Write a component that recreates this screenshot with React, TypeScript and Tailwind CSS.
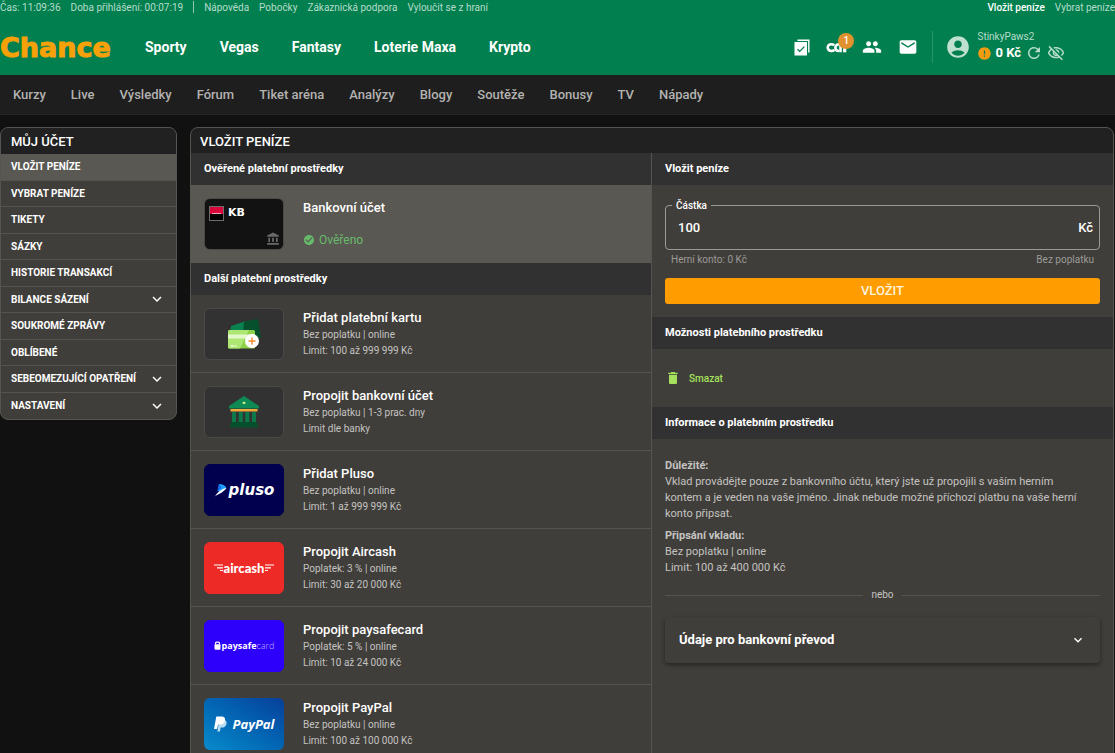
import React from 'react';
import {
    MdAccountBalance,
    MdAccountCircle,
    MdCheckCircle,
    MdDelete,
    MdEmail,
    MdError,
    MdExpandMore,
    MdOutlineVisibilityOff,
    MdPeople,
    MdRefresh,
} from 'react-icons/md';
import { clsx } from 'clsx';

const helpLinks = ['Nápověda', 'Pobočky', 'Zákaznická podpora', 'Vyloučit se z hraní'];
const products = ['Sporty', 'Vegas', 'Fantasy', 'Loterie Maxa', 'Krypto'];
const subNav = ['Kurzy', 'Live', 'Výsledky', 'Fórum', 'Tiket aréna', 'Analýzy', 'Blogy', 'Soutěže', 'Bonusy', 'TV', 'Nápady'];

const accountMenu = [
    { label: 'Vložit peníze', active: true },
    { label: 'Vybrat peníze' },
    { label: 'Tikety' },
    { label: 'Sázky' },
    { label: 'Historie transakcí' },
    { label: 'Bilance sázení', expandable: true },
    { label: 'Soukromé zprávy' },
    { label: 'Oblíbené' },
    { label: 'Sebeomezující opatření', expandable: true },
    { label: 'Nastavení', expandable: true },
];

const TicketIcon = () => (
    <svg width="16" height="17" viewBox="0 0 16 17" fill="none">
        <path d="M3.5 1.2H14.8V13.5" stroke="#fff" strokeWidth="1.4" />
        <rect x="0.5" y="3" width="12.5" height="13.5" fill="#fff" />
        <path d="M3.5 10.2l2.2 2.2 4.6-4.8" stroke="#027f4e" strokeWidth="1.3" />
    </svg>
);

const CommunityIcon = () => (
    <svg width="22" height="13" viewBox="0 0 22 13" fill="none" stroke="#fff">
        <path d="M8.3 4.2C7.4 3.5 6.3 3.2 5.2 3.2 3.200 3.200 1.700 4.700 1.700 6.600S3.200 10 5.200 10c1.200 0 2.300-.3 3.200-1" strokeWidth="2.6" />
        <path d="M13 10c-2.200 0-3.600-1.400-3.600-3.300S10.800 3.300 13 3.300h1.500V11.300" strokeWidth="2.600" />
        <path d="M18.700 4V11.300" strokeWidth="3.200" />
    </svg>
);

const CardsArt = () => (
    <svg width="34" height="32" viewBox="0 0 34 32">
        <path d="M4 8L19 3l4 12H3z" fill="#0b8050" />
        <path d="M17 3.500l12.500-2.300c1-.2 1.500.2 1.700 1L34 20 16 18z" fill="#07502d" />
        <rect x="1" y="12" width="27" height="18.500" rx="1.500" fill="#8fd14a" />
        <path d="M2.500 12H22L13 30.500H2.500A1.500 1.500 0 0 1 1 29V13.500A1.500 1.500 0 0 1 2.500 12z" fill="#aee673" />
        <rect x="1" y="16.500" width="27" height="4" fill="#e3f8cb" />
        <path d="M3.500 28h4M8.500 28h1.500" stroke="#e9fbd5" strokeWidth="1.400" />
        <circle cx="25" cy="23" r="7" fill="#fff" />
        <path d="M25 19.500v7M21.500 23h7" stroke="#ef8b2c" strokeWidth="1.400" />
    </svg>
);

const BankArt = () => (
    <svg width="32" height="34" viewBox="0 0 32 34">
        <path d="M16 1L31 11v2.500H1V11z" fill="#0f8a55" />
        <path d="M14 8L16 6.500 18 8l-2 1.200z" fill="#d3ec8b" />
        <rect x="2.500" y="14" width="27" height="2.500" fill="#efa93a" />
        <path d="M4 17h4v10H4zM10.700 17h4v10h-4zM17.300 17h4v10h-4zM24 17h4v10h-4z" fill="#0b7a4a" />
        <path d="M3 27h26v2.500h1V32.500H2v-3h1z" fill="#06502d" />
    </svg>
);

const PlusoArt = () => (
    <div className="flex items-center gap-0.5">
        <svg width="13" height="14" viewBox="0 0 13 14">
            <path d="M5 1c3.500 0 6 1.500 7.500 4L6.500 9 3.500 7.500z" fill="#1fa0ff" />
            <path d="M5 1L3.500 8l4-3z" fill="#1467e8" />
            <path d="M12.500 5C9 5.500 4 8 1 13.500 4 11 9 10 12.500 5z" fill="#fff" />
        </svg>
        <span className="font-['DejaVu_Sans'] text-[15px] leading-4 font-bold italic">pluso</span>
    </div>
);

const Wing = ({ flip = false }: { flip?: boolean }) => (
    <svg width="10" height="8" viewBox="0 0 10 8" className={flip ? '-scale-x-100' : ''} stroke="#fff" strokeWidth="1.200">
        <path d="M0 1h9M3 3.800h6M6 6.500h3" />
    </svg>
);

const AircashArt = () => (
    <div className="flex items-center">
        <Wing />
        <span className="font-['Lato'] text-[13px] leading-4 font-black">aircash</span>
        <Wing flip />
    </div>
);

const PaysafeArt = () => (
    <div className="flex items-center gap-px">
        <svg width="7" height="9" viewBox="0 0 7 9">
            <path d="M1.500 3.500V2.200a1 1 0 0 1 1-1h2a1 1 0 0 1 1 1v1.300" fill="none" stroke="#fff" strokeWidth="1.200" />
            <rect x="0.500" y="3.200" width="6" height="5.500" rx="1" fill="#fff" />
        </svg>
        <span className="font-['Open_Sans'] text-[9px] leading-4 font-bold">
            paysafe<span className="font-light text-white/70">card</span>
        </span>
    </div>
);

const PayPalArt = () => (
    <div className="flex items-center gap-1.5">
        <svg width="13" height="16" viewBox="0 0 13 16">
            <path d="M5.200 3.800h5c2 .6 2.800 2.200 2.300 4.200-.6 2.500-2.300 3.600-4.800 3.600H6.600L6 15.500H3.400z" fill="#b9dcf2" />
            <path d="M2.300.5h5.200c2.700 0 4 1.500 3.500 4-.6 2.800-2.400 4-5 4H4L3.100 13H0z" fill="#fff" />
        </svg>
        <span className="font-['Open_Sans'] text-[13px] leading-4 font-bold italic">PayPal</span>
    </div>
);

const methods = [
    { title: 'Přidat platební kartu', fee: 'Bez poplatku | online', limit: 'Limit: 100 až 999 999 Kč', tile: 'bg-[#323233] border-[#4a4947]', art: <CardsArt /> },
    { title: 'Propojit bankovní účet', fee: 'Bez poplatku | 1-3 prac. dny', limit: 'Limit dle banky', tile: 'bg-[#323233] border-[#4a4947]', art: <BankArt /> },
    { title: 'Přidat Pluso', fee: 'Bez poplatku | online', limit: 'Limit: 1 až 999 999 Kč', tile: 'bg-[#00004f] border-[#00004f]', art: <PlusoArt /> },
    { title: 'Propojit Aircash', fee: 'Poplatek: 3 % | online', limit: 'Limit: 30 až 20 000 Kč', tile: 'bg-[#ee2a27] border-[#ee2a27]', art: <AircashArt /> },
    { title: 'Propojit paysafecard', fee: 'Poplatek: 5 % | online', limit: 'Limit: 10 až 24 000 Kč', tile: 'bg-[#2c00fa] border-[#2c00fa]', art: <PaysafeArt /> },
    { title: 'Propojit PayPal', fee: 'Bez poplatku | online', limit: 'Limit: 100 až 100 000 Kč', tile: 'bg-linear-to-tr from-[#0a8bcb] to-[#083f9b] border-transparent bg-origin-border', art: <PayPalArt /> },
];

const SectionTitle = ({ children }: { children: React.ReactNode }) => (
    <h2 className="h-8 px-[13px] pt-px flex items-center bg-[#313132] text-[11px] font-bold text-white">{children}</h2>
);

const Header = () => (
    <header className="bg-[#027f4e] h-[75px]">
        <div className="flex items-center justify-between h-3.5 text-[10px] text-[#b5dccb]">
            <div className="flex items-center">
                <span>Čas: 11:09:36</span>
                <span className="ml-2.5">Doba přihlášení: 00:07:19</span>
                <span className="mx-2.5 w-px h-3 bg-[#8cc7ae]" />
                <nav className="flex gap-2.5">
                    {helpLinks.map((l) => <a key={l} href="#">{l}</a>)}
                </nav>
            </div>
            <div className="flex gap-2.5">
                <a href="#" className="font-medium text-white">Vložit peníze</a>
                <a href="#">Vybrat peníze</a>
            </div>
        </div>

        <div className="flex items-center h-[66px]">
            <a href="#" className="w-[113px] pt-0.5 font-['DejaVu_Sans'] text-[27px] leading-8 font-bold text-[#f7a109] [-webkit-text-stroke:1px_#f7a109]">Chance</a>
            <nav className="flex gap-[33px] ml-8 text-[14px] font-bold text-white">
                {products.map((p) => <a key={p} href="#">{p}</a>)}
            </nav>

            <div className="ml-auto mr-[50px] flex items-center">
                <button type="button" aria-label="Tikety"><TicketIcon /></button>
                <button type="button" aria-label="Komunita" className="relative ml-4">
                    <CommunityIcon />
                    <span className="absolute -top-2 -right-1.5 w-4 h-4 rounded-full bg-[#e0922e] text-white text-[10px] leading-4 font-medium text-center">1</span>
                </button>
                <button type="button" aria-label="Přátelé" className="ml-3.5"><MdPeople className="w-5 h-5 text-white" /></button>
                <button type="button" aria-label="Zprávy" className="ml-4"><MdEmail className="w-5 h-5 text-white" /></button>
                <span className="ml-3.5 w-px h-8 bg-[#2c9168]" />
                <MdAccountCircle className="ml-3 w-[26px] h-[26px] text-[#bfe0d0]" />
                <div className="ml-1.5">
                    <div className="text-[10px] leading-3 text-[#b5dccb]">StinkyPaws2</div>
                    <div className="flex items-center h-5 text-[#b5dccb]">
                        <MdError className="w-[15px] h-[15px] text-[#f39c12]" />
                        <span className="ml-[3px] text-[13px] font-bold text-white">0 Kč</span>
                        <button type="button" aria-label="Obnovit" className="ml-1"><MdRefresh className="w-[18px] h-[18px]" /></button>
                        <button type="button" aria-label="Skrýt zůstatek" className="ml-1"><MdOutlineVisibilityOff className="w-[18px] h-[18px]" /></button>
                    </div>
                </div>
            </div>
        </div>
    </header>
);

const Sidebar = () => (
    <aside className="w-[177px] shrink-0 self-start rounded-lg overflow-hidden border border-[#55544f] bg-[#403e3a]">
        <h2 className="h-[26px] px-2.5 pt-px flex items-center bg-[#212121] text-[13px] font-medium text-white">MŮJ ÚČET</h2>
        <nav className="grid auto-rows-fr h-[265px]">
            {accountMenu.map((item) => (
                <a
                    key={item.label}
                    href="#"
                    className={clsx(
                        'flex items-center justify-between pl-2.5 pr-2.5 border-b border-[#55544f] last:border-b-0 text-[10px] font-bold uppercase text-white',
                        item.active && 'bg-[#5a5853]'
                    )}
                >
                    {item.label}
                    {item.expandable && <MdExpandMore className="w-[18px] h-[18px]" />}
                </a>
            ))}
        </nav>
    </aside>
);

const PaymentMethods = () => (
    <section className="w-1/2 border-r border-[#55544f]">
        <SectionTitle>Ověřené platební prostředky</SectionTitle>
        <div className="flex items-center h-[78px] px-[13px] bg-[#5a5853] text-white">
            <div className="relative w-20 h-[52px] rounded-md border border-[#4c4a46] bg-[#121213]">
                <div className="flex items-center gap-1 pl-1 pt-1.5">
                    <svg width="15" height="15" viewBox="0 0 15 15">
                        <rect x="0.500" y="0.500" width="14" height="14" fill="#000" stroke="#6d6d6d" />
                        <rect x="1" y="1" width="13" height="7" fill="#d8063a" />
                        <rect x="3" y="7" width="9" height="1" fill="#e9a9b8" />
                    </svg>
                    <span className="font-['DejaVu_Sans'] text-[11px] leading-4 font-bold">KB</span>
                </div>
                <MdAccountBalance className="absolute right-[3px] bottom-[3px] w-3.5 h-3.5 text-[#6a6a6a]" />
            </div>
            <div className="ml-[19px]">
                <div className="text-[13px] leading-4 font-medium">Bankovní účet</div>
                <div className="mt-4 flex items-center gap-1 text-[12px] leading-4 text-[#66bb6a]">
                    <MdCheckCircle className="w-3 h-3" /> Ověřeno
                </div>
            </div>
        </div>

        <SectionTitle>Další platební prostředky</SectionTitle>
        <ul>
            {methods.map((m) => (
                <li key={m.title} className="border-b border-[#55544f]">
                    <button type="button" className="flex items-center w-full h-[77px] px-[13px] text-left">
                        <span className={clsx('w-20 h-[52px] flex items-center justify-center rounded-md border text-white', m.tile)}>
                            {m.art}
                        </span>
                        <span className="ml-[19px] flex flex-col text-[10px] leading-4 text-[#c4c3c1]">
                            <span className="text-[13px] leading-[18px] font-medium text-white">{m.title}</span>
                            <span>{m.fee}</span>
                            <span>{m.limit}</span>
                        </span>
                    </button>
                </li>
            ))}
        </ul>
    </section>
);

const DepositPanel = () => {
    const [amount, setAmount] = React.useState('100');

    return (
        <section className="w-1/2">
            <SectionTitle>Vložit peníze</SectionTitle>
            <form className="px-[13px] pt-5 pb-[13px]" onSubmit={(e) => e.preventDefault()}>
                <div className="relative flex items-center h-[45px] px-3 rounded border border-[#9b9a97] text-[13px] font-medium text-white">
                    <label htmlFor="amount" className="absolute -top-2 left-1.5 px-1 bg-[#403e3a] text-[10px] leading-4">Částka</label>
                    <input
                        id="amount"
                        type="text"
                        value={amount}
                        onChange={(e) => setAmount(e.target.value)}
                        className="flex-1 min-w-0 bg-transparent outline-none"
                    />
                    <span className="-mr-1.5">Kč</span>
                </div>
                <div className="flex justify-between px-1.5 pt-0.5 text-[10px] leading-4 text-[#9b9a97]">
                    <span>Herní konto: 0 Kč</span>
                    <span>Bez poplatku</span>
                </div>
                <button type="submit" className="mt-2.5 w-full h-[26px] rounded-[3px] bg-[#ff9c00] text-[13px] font-medium text-[#fff3dc]">VLOŽIT</button>
            </form>

            <SectionTitle>Možnosti platebního prostředku</SectionTitle>
            <div className="flex items-center h-[58px] px-[13px]">
                <button type="button" className="flex items-center gap-2 text-[10px] font-medium text-[#a5e05c]">
                    <MdDelete className="w-4 h-4" /> Smazat
                </button>
            </div>

            <SectionTitle>Informace o platebním prostředku</SectionTitle>
            <div className="px-[13px] pt-[19px] text-[11px] leading-4 text-[#c4c3c1]">
                <h3 className="font-bold">Důležité:</h3>
                <p className="pr-4">Vklad provádějte pouze z bankovního účtu, který jste už propojili s vaším herním kontem a je veden na vaše jméno. Jinak nebude možné příchozí platbu na vaše herní konto připsat.</p>
                <h3 className="mt-1.5 font-bold">Připsání vkladu:</h3>
                <p>Bez poplatku | online</p>
                <p>Limit: 100 až 400 000 Kč</p>

                <div className="flex items-center gap-2 mt-[11px] mb-3.5 text-[10px] leading-4">
                    <span className="flex-1 h-px bg-[#55544f]" />
                    nebo
                    <span className="flex-1 h-px bg-[#55544f]" />
                </div>
                <button type="button" className="flex items-center justify-between w-full h-[46px] px-3.5 rounded shadow-[0_2px_4px_rgba(0,0,0,0.4)] text-[13px] font-bold text-white">
                    Údaje pro bankovní převod
                    <MdExpandMore className="w-4 h-4" />
                </button>
            </div>
        </section>
    );
};

export default function App() {
    return (
        <div className="h-screen overflow-hidden flex flex-col bg-[#111112] font-['Roboto',sans-serif]">
            <Header />
            <nav className="shrink-0 flex items-center gap-[25px] h-10 px-[13px] bg-[#1e1e1e] border-b border-[#262626] text-[13px] font-medium text-[#b3b2b0]">
                {subNav.map((item) => <a key={item} href="#">{item}</a>)}
            </nav>
            <div className="flex gap-[13px] mt-3 pr-px">
                <Sidebar />
                <main className="flex-1 min-w-0 rounded-t-lg overflow-hidden border border-[#55544f] bg-[#403e3a]">
                    <h1 className="h-[25px] px-[9px] pt-0.5 flex items-center bg-[#212121] text-[13px] font-medium text-white">VLOŽIT PENÍZE</h1>
                    <div className="flex">
                        <PaymentMethods />
                        <DepositPanel />
                    </div>
                </main>
            </div>
        </div>
    );
}
